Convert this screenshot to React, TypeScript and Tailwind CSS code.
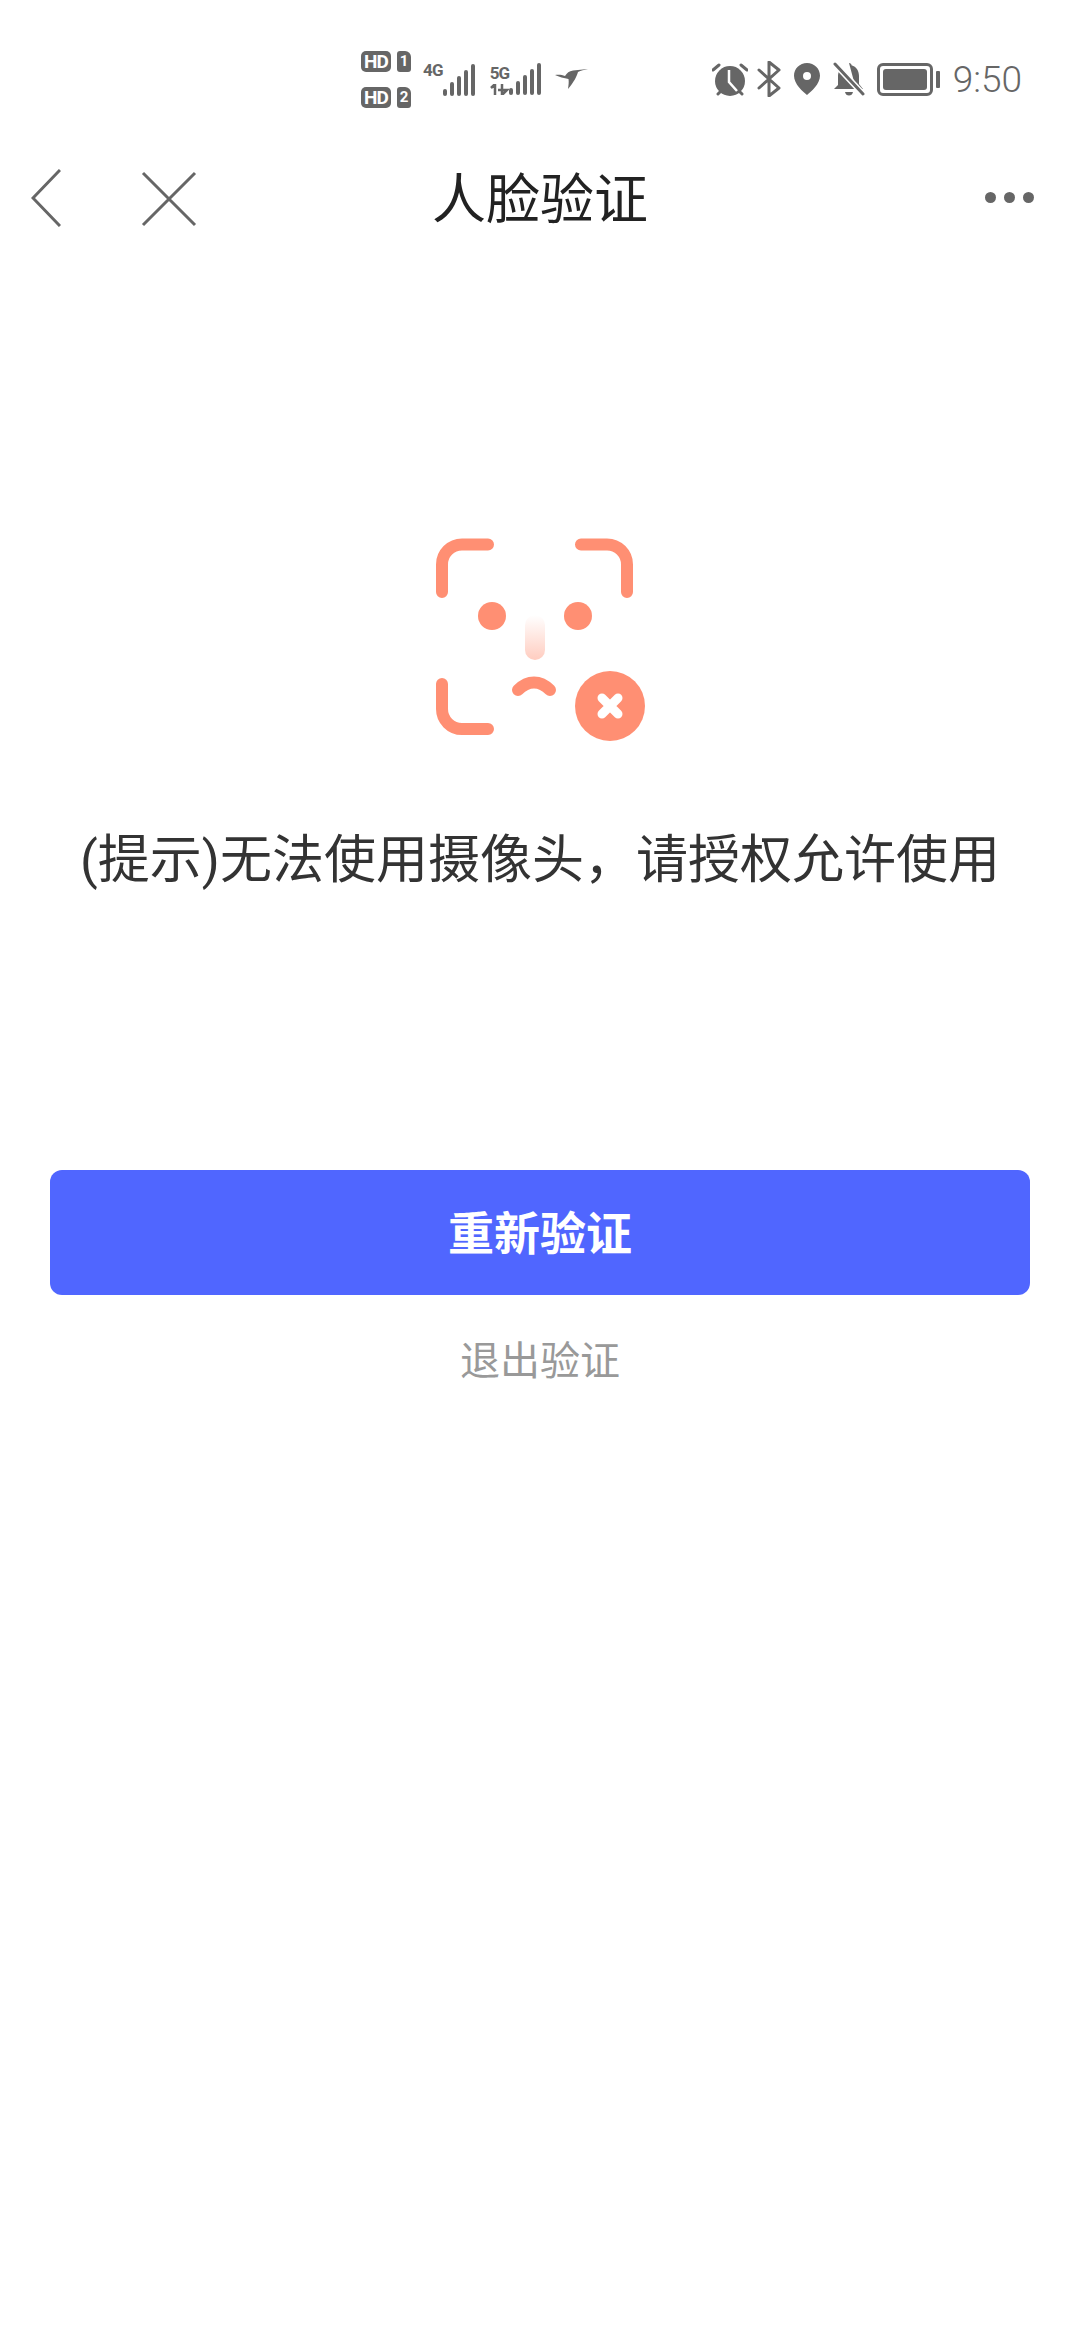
import React from "react";

const cjk = "font-['Roboto','Noto_Sans_CJK_SC',sans-serif]";

// dual sim badge: "HD" pill plus slot number
const SimBadge = ({ slot }: { slot: string }) => (
  <div className="flex items-center gap-[6px]">
    <span className="flex h-[21px] w-[30px] items-center justify-center rounded-[5px] bg-[#666] font-['Roboto',sans-serif] text-[19px] font-bold leading-none tracking-tighter text-white">
      HD
    </span>
    <span className="flex h-[21px] w-[14px] items-center justify-center rounded-[3px] rounded-tr-[6px] bg-[#666] font-['Roboto',sans-serif] text-[15px] font-bold leading-none text-white">
      {slot}
    </span>
  </div>
);

const SignalBars = () => (
  <svg width="33" height="32" viewBox="0 0 33 32" fill="#666">
    <rect x="0" y="25" width="4" height="7" rx="2" />
    <rect x="7" y="18" width="4" height="14" rx="2" />
    <rect x="14" y="12" width="4" height="20" rx="2" />
    <rect x="21" y="6" width="4" height="26" rx="2" />
    <rect x="28" y="0" width="4" height="32" rx="2" />
  </svg>
);

const StatusBar = () => (
  <div className="flex h-[150px] items-center pl-[361px] pr-[58px] pt-[8px]">
    <div className="flex w-[52px] flex-col gap-[15px]">
      <SimBadge slot="1" />
      <SimBadge slot="2" />
    </div>
    <div className="ml-[10px] flex items-end pb-[1px]">
      <span className="mb-[17px] font-['Roboto',sans-serif] text-[17px] font-bold leading-none tracking-tighter text-[#666]">4G</span>
      <SignalBars />
    </div>
    <div className="ml-[14px] flex items-end pb-[1px]">
      <div className="flex flex-col items-start">
        <span className="font-['Roboto',sans-serif] text-[17px] font-bold leading-none tracking-tighter text-[#666]">5G</span>
        <svg width="19" height="11" viewBox="0 0 19 11" className="mt-[2px]" stroke="#666" strokeWidth="2.5" fill="none">
          <path d="M5 0v11M5 0L1 4M12 11V0M12 11l5-5h-9" />
        </svg>
      </div>
      <SignalBars />
    </div>
    {/* hummingbird glyph */}
    <svg width="34" height="20" viewBox="0 0 34 20" className="ml-[13px]" fill="#666">
      <path d="M0 6c3-.6 7-.4 10 1 2-3 4-5 8-5.500C23 .8 28 .5 33 0c-4 1-7 1.500-10 3-1 4-4 10-10 17 .5-4 1-7 .5-10C9 9 4 8 0 6z" />
    </svg>
    <div className="ml-auto flex items-center">
      {/* alarm clock */}
      <svg width="36" height="34" viewBox="0 0 36 34" className="mt-[1px]">
        <path d="M1 7l6-5M35 7l-6-5M6 31l3-3M30 31l-3-3" stroke="#666" strokeWidth="3" strokeLinecap="round" />
        <circle cx="18" cy="18" r="15" fill="#666" />
        <path d="M17 7v12l8 9" stroke="#fff" strokeWidth="2.500" fill="none" />
      </svg>
      {/* bluetooth */}
      <svg width="24" height="36" viewBox="0 0 24 36" fill="none" stroke="#666" strokeWidth="3" strokeLinecap="round" strokeLinejoin="round" className="ml-[9px]">
        <path d="M2 9l20 18-10 8V1l10 8L2 27" />
      </svg>
      {/* location pin */}
      <svg width="26" height="32" viewBox="0 0 26 32" className="ml-[13px]">
        <path fillRule="evenodd" fill="#666" d="M13 0c7.200 0 13 5.600 13 12.800C26 21 17 29 13 32 9 29 0 21 0 12.800 0 5.600 5.800 0 13 0zm0 9a4 4 0 1 0 0 8 4 4 0 0 0 0-8z" />
      </svg>
      {/* muted bell */}
      <svg width="32" height="34" viewBox="0 0 32 34" className="ml-[13px]">
        <path fill="#666" d="M16 1c1.500 0 2.500 1 2.500 2.200C23.500 4.500 26 9 26 14v8l4 5H1l4-4v-9c0-2 .5-4 1.500-5.500L23 27M12 30h8c-.5 2.500-2 3.500-4 3.500s-3.500-1-4-3.500z" />
        <path d="M2 2l28 30" stroke="#fff" strokeWidth="6" />
        <path d="M2 2l28 30" stroke="#666" strokeWidth="3" strokeLinecap="round" />
      </svg>
      {/* battery */}
      <div className="ml-[12px] flex items-center gap-[3px]">
        <div className="flex h-[33px] w-[56px] rounded-[6px] border-[3px] border-[#666] p-[3px]">
          <div className="flex-1 rounded-[3px] bg-[#666]" />
        </div>
        <div className="h-[17px] w-[4px] rounded-[1px] bg-[#666]" />
      </div>
      <span className="ml-[13px] font-['Roboto',sans-serif] text-[37px] font-light leading-none text-[#666]">9:50</span>
    </div>
  </div>
);

const NavBar = () => (
  <div className="relative flex h-[100px] items-center">
    <svg width="30" height="58" viewBox="0 0 30 58" fill="none" stroke="#666" strokeWidth="3" className="ml-[31px] mb-[5px]">
      <path d="M29 1L2 29l27 28" />
    </svg>
    <svg width="56" height="56" viewBox="0 0 56 56" fill="none" stroke="#666" strokeWidth="3" className="ml-[80px] mb-[3px]">
      <path d="M2 2l52 52M54 2L2 54" />
    </svg>
    <h1 className={`absolute inset-x-0 pt-[2px] text-center text-[54px] leading-none text-[#222] ${cjk}`}>人脸验证</h1>
    <div className="ml-auto mr-[46px] mb-[5px] flex gap-[8px]">
      <span className="size-[11px] rounded-full bg-[#666]" />
      <span className="size-[11px] rounded-full bg-[#666]" />
      <span className="size-[11px] rounded-full bg-[#666]" />
    </div>
  </div>
);

// face frame with a frown and the failure badge
const FaceError = () => (
  <svg width="220" height="220" viewBox="0 0 220 220" fill="none">
    <defs>
      <linearGradient id="nose" x1="0" y1="0" x2="0" y2="1">
        <stop offset="0" stopColor="#ff8f73" stopOpacity="0" />
        <stop offset="1" stopColor="#ff8f73" stopOpacity="0.45" />
      </linearGradient>
    </defs>
    <g stroke="#ff8f73" strokeWidth="12" strokeLinecap="round">
      <path d="M58 14.500H32A20 20 0 0 0 12 34.500V62" />
      <path d="M151 14.500h26a20 20 0 0 1 20 20V62" />
      <path d="M12 154v25a20 20 0 0 0 20 20h26" />
      <path d="M88 160c10-10 22-10 32 0" />
    </g>
    <circle cx="62" cy="86" r="14" fill="#ff8f73" />
    <circle cx="148" cy="86" r="14" fill="#ff8f73" />
    <rect x="95" y="85" width="20" height="45" rx="10" fill="url(#nose)" />
    <circle cx="180" cy="176" r="35" fill="#ff8f73" />
    <path d="M172 168l16 16M188 168l-16 16" stroke="#fff" strokeWidth="9" strokeLinecap="round" />
  </svg>
);

export default function App() {
  return (
    <div className={`flex h-[2340px] w-[1080px] flex-col bg-white ${cjk}`}>
      <StatusBar />
      <NavBar />
      <main className="flex flex-col items-center">
        <div className="mt-[280px] flex w-[220px] justify-center">
          <FaceError />
        </div>
        <p className="mt-[72px] whitespace-nowrap text-[52px] leading-[78px] text-[#333]">(提示)无法使用摄像头，请授权允许使用</p>
        <button className="mt-[270px] flex h-[125px] w-[980px] items-center justify-center rounded-[12px] bg-[#5066ff] pt-[3px] text-[46px] font-bold text-white">
          重新验证
        </button>
        <button className="mt-[37px] text-[40px] leading-[60px] text-[#999]">退出验证</button>
      </main>
    </div>
  );
}
